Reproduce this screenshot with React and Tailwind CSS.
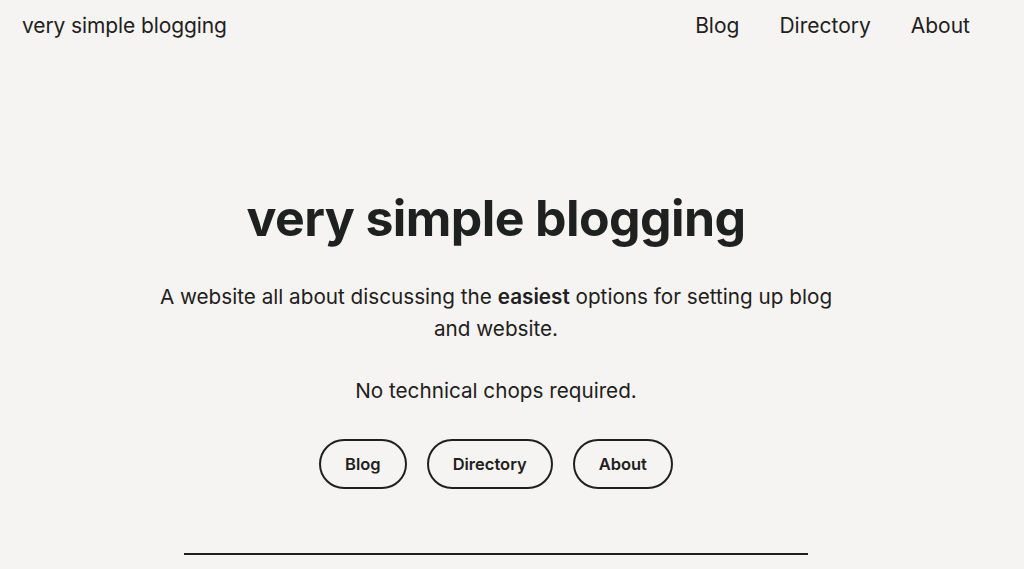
export default function App() {
  const font = { fontFamily: "Inter, 'Noto Sans', sans-serif" };
  return (
    <div className="min-h-[569px] bg-[#f5f4f2] text-[#1f2020]" style={font}>
      <div className="w-[992px]">
        <header className="flex items-center justify-between pl-[22px] pr-[22px] h-[52px]">
          <a className="text-[21px] tracking-[-0.1px]">very simple blogging</a>
          <nav className="flex gap-[40px] text-[21px]">
            <a>Blog</a>
            <a>Directory</a>
            <a>About</a>
          </nav>
        </header>
        <main className="flex flex-col items-center pt-[136px]">
          <h1 className="text-[50px] font-bold leading-[60px] tracking-[-0.6px]">very simple blogging</h1>
          <p className="mt-[33px] text-[20.7px] leading-[32px] text-center w-[696px]">
            A website all about discussing the <strong className="font-semibold">easiest</strong> options for setting up blog and website.
          </p>
          <p className="mt-[30px] text-[20.7px] leading-[32px]">No technical chops required.</p>
          <div className="mt-[32px] flex gap-[20px]">
            <a className="h-[50px] px-[24px] flex items-center rounded-full border-2 border-[#1f2020] text-[16.5px] font-semibold">Blog</a>
            <a className="h-[50px] px-[24px] flex items-center rounded-full border-2 border-[#1f2020] text-[16.5px] font-semibold">Directory</a>
            <a className="h-[50px] px-[24px] flex items-center rounded-full border-2 border-[#1f2020] text-[16.5px] font-semibold">About</a>
          </div>
          <hr className="mt-[64px] w-[624px] border-0 h-[2px] bg-[#1f2020]" />
        </main>
      </div>
    </div>
  );
}
